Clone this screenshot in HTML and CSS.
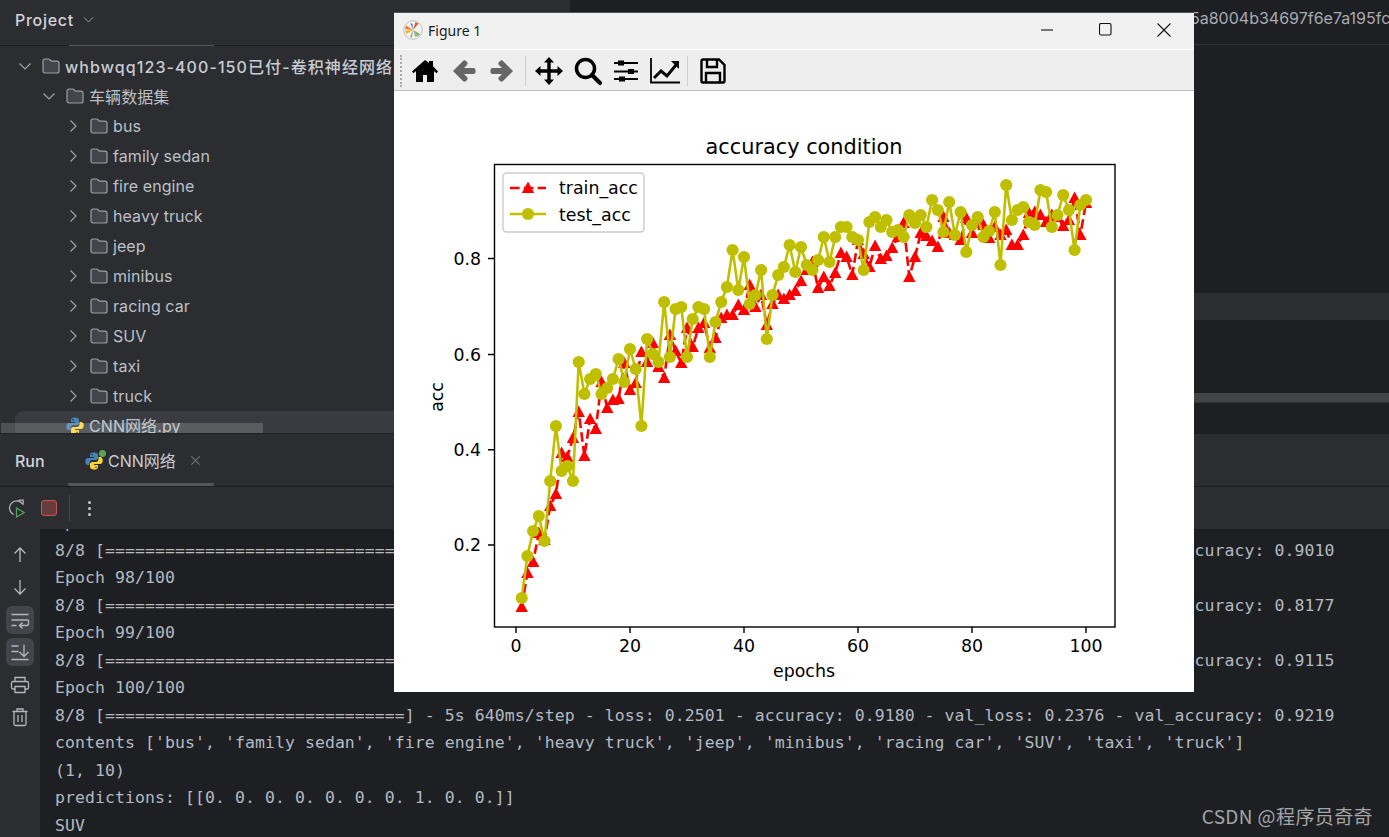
FILE: index.html
```html
<!DOCTYPE html>
<html lang="zh">
<head>
<meta charset="utf-8">
<title>Figure 1</title>
<link rel="stylesheet" href="styles.css">
</head>
<body>
<svg class="defs" width="0" height="0" aria-hidden="true">
  <symbol id="folder" viewBox="0 0 18 16"><path class="folder-path" d="M1 3a2 2 0 0 1 2-2h3.600a1.500 1.500 0 0 1 1.100.500L9.400 3.200H15a2 2 0 0 1 2 2V13a2 2 0 0 1-2 2H3a2 2 0 0 1-2-2z"/></symbol>
  <symbol id="chev-r" viewBox="0 0 16 16"><path class="chev" d="M5.500 2.500 11 8l-5.500 5.500"/></symbol>
  <symbol id="chev-d" viewBox="0 0 16 16"><path class="chev" d="M2.500 5.500 8 11l5.500-5.500"/></symbol>
  <symbol id="python" viewBox="0 0 18 18">
    <path class="py-blue" d="M8.800.5C5.500.5 5 1.800 5 3v2h4v1H3C1.300 6 .3 7.300.3 9.500S1.300 13 3 13h1.500v-2.200c0-1.500 1.200-2.800 2.800-2.800h3.500c1.200 0 2.200-1 2.200-2.200V3c0-1.500-1.500-2.500-4.200-2.500z"/>
    <path class="py-yellow" d="M9.200 17.500c3.300 0 3.800-1.300 3.800-2.500v-2H9v-1h6c1.700 0 2.700-1.300 2.700-3.500S16.700 5 15 5h-1.500v2.200c0 1.500-1.200 2.800-2.800 2.800H7.200C6 10 5 11 5 12.200V15c0 1.500 1.500 2.500 4.200 2.500z"/>
    <circle class="py-eye" cx="7" cy="2.700" r=".8"/><circle class="py-eye" cx="11" cy="15.300" r=".8"/>
  </symbol>
</svg>

<div class="ide">
  <div class="upper">
    <section class="project">
      <header class="project-head">
        <span class="project-title">Project</span>
        <svg class="head-chev"><use href="#chev-d"/></svg>
        <span class="head-underline"></span>
      </header>
      <ul class="tree">
        <li class="row lvl0"><svg class="chv"><use href="#chev-d"/></svg><svg class="fld"><use href="#folder"/></svg><span class="root-name">whbwqq123-400-150已付-卷积神经网络</span></li>
        <li class="row lvl1"><svg class="chv"><use href="#chev-d"/></svg><svg class="fld"><use href="#folder"/></svg><span>车辆数据集</span></li>
        <li class="row lvl2"><svg class="chv"><use href="#chev-r"/></svg><svg class="fld"><use href="#folder"/></svg><span>bus</span></li>
        <li class="row lvl2"><svg class="chv"><use href="#chev-r"/></svg><svg class="fld"><use href="#folder"/></svg><span>family sedan</span></li>
        <li class="row lvl2"><svg class="chv"><use href="#chev-r"/></svg><svg class="fld"><use href="#folder"/></svg><span>fire engine</span></li>
        <li class="row lvl2"><svg class="chv"><use href="#chev-r"/></svg><svg class="fld"><use href="#folder"/></svg><span>heavy truck</span></li>
        <li class="row lvl2"><svg class="chv"><use href="#chev-r"/></svg><svg class="fld"><use href="#folder"/></svg><span>jeep</span></li>
        <li class="row lvl2"><svg class="chv"><use href="#chev-r"/></svg><svg class="fld"><use href="#folder"/></svg><span>minibus</span></li>
        <li class="row lvl2"><svg class="chv"><use href="#chev-r"/></svg><svg class="fld"><use href="#folder"/></svg><span>racing car</span></li>
        <li class="row lvl2"><svg class="chv"><use href="#chev-r"/></svg><svg class="fld"><use href="#folder"/></svg><span>SUV</span></li>
        <li class="row lvl2"><svg class="chv"><use href="#chev-r"/></svg><svg class="fld"><use href="#folder"/></svg><span>taxi</span></li>
        <li class="row lvl2"><svg class="chv"><use href="#chev-r"/></svg><svg class="fld"><use href="#folder"/></svg><span>truck</span></li>
        <li class="row file selected"><svg class="fld"><use href="#python"/></svg><span class="file-name">CNN网络.py</span></li>
      </ul>
      <div class="tree-scroll"></div>
    </section>
    <section class="editor">
      <div class="editor-tabs"><span class="hash">5a8004b34697f6e7a195fc</span></div>
      <div class="editor-space-a"></div>
      <div class="editor-band"></div>
      <div class="editor-space-b"></div>
      <div class="editor-scroll"></div>
    </section>
  </div>

  <section class="run">
    <header class="run-head">
      <span class="run-title">Run</span>
      <div class="run-tab">
        <span class="tab-icon"><svg class="tab-py"><use href="#python"/></svg><i class="tab-dot"></i></span>
        <span class="tab-name">CNN网络</span>
        <svg class="tab-close" viewBox="0 0 12 12"><path d="M1.500 1.500l9 9M10.500 1.500l-9 9"/></svg>
      </div>
    </header>
    <div class="run-tools">
      <svg class="tool-ic" viewBox="0 0 20 20">
        <path class="ic-line" d="M16.500 5.500A7.500 7.500 0 1 0 7 16.300"/><path class="ic-line" d="M12.200 1.200h4.800V6"/>
        <path class="ic-green" d="M10 9.500l8 4.700-8 4.700z"/>
      </svg>
      <span class="stop"></span>
      <span class="tool-sep"></span>
      <span class="kebab"><i></i><i></i><i></i></span>
    </div>
    <div class="run-body">
      <aside class="side-tools">
        <svg class="side-ic" viewBox="0 0 20 20"><path class="ic-line" d="M10 17V3M4.500 8.500 10 3l5.500 5.500"/></svg>
        <svg class="side-ic" viewBox="0 0 20 20"><path class="ic-line" d="M10 3v14M4.500 11.500 10 17l5.500-5.500"/></svg>
        <span class="side-btn"><svg class="side-ic" viewBox="0 0 20 20"><path class="ic-line" d="M1.500 4.500h17M1.500 10h17M1.500 15.500h5M18.500 10v3.500a2 2 0 0 1-2 2H10M12.500 12.500 9.500 15.500l3 3"/></svg></span>
        <span class="side-btn"><svg class="side-ic" viewBox="0 0 20 20"><path class="ic-line" d="M1.500 4h7M1.500 9.500h7M1.500 17.500h17M14 2.500v12M9.500 10l4.500 4.500 4.500-4.500"/></svg></span>
        <svg class="side-ic" viewBox="0 0 20 20"><path class="ic-line" d="M5 6.500V2.500h10v4M5 14H3a1.500 1.500 0 0 1-1.500-1.500V8A1.500 1.500 0 0 1 3 6.500h14A1.500 1.500 0 0 1 18.500 8v4.500A1.500 1.500 0 0 1 17 14h-2M5 11.500h10v6H5z"/></svg>
        <svg class="side-ic" viewBox="0 0 20 20"><path class="ic-line" d="M2.500 4.500h15M7 4.500V2h6v2.500M4 4.500V17a1.500 1.500 0 0 0 1.500 1.500h9A1.500 1.500 0 0 0 16 17V4.500M8 8v7M12 8v7"/></svg>
      </aside>
      <div class="console"><pre class="log">Epoch 97/100
8/8 [==============================] - 5s 652ms/step - loss: 0.2873 - accuracy: 0.9055 - val_loss: 0.2689 - val_accuracy: 0.9010
Epoch 98/100
8/8 [==============================] - 5s 648ms/step - loss: 0.2644 - accuracy: 0.9100 - val_loss: 0.4761 - val_accuracy: 0.8177
Epoch 99/100
8/8 [==============================] - 5s 645ms/step - loss: 0.2712 - accuracy: 0.9080 - val_loss: 0.2655 - val_accuracy: 0.9115
Epoch 100/100
8/8 [==============================] - 5s 640ms/step - loss: 0.2501 - accuracy: 0.9180 - val_loss: 0.2376 - val_accuracy: 0.9219
contents ['bus', 'family sedan', 'fire engine', 'heavy truck', 'jeep', 'minibus', 'racing car', 'SUV', 'taxi', 'truck']
(1, 10)
predictions: [[0. 0. 0. 0. 0. 0. 0. 1. 0. 0.]]
SUV</pre></div>
    </div>
  </section>
</div>

<div class="watermark">CSDN @程序员奇奇</div>

<div class="figure">
  <header class="fig-title">
    <svg class="fig-logo" viewBox="0 0 20 20">
      <circle class="logo-disc" cx="10" cy="10" r="9.300"/>
      <path class="logo-o" d="M10 10 3 5.500 2 9z"/><path class="logo-y" d="M10 10 2 10.500 3.500 14z"/>
      <path class="logo-r" d="M10 10 12.500 2 15.500 3.500z"/><path class="logo-g" d="M10 10 17 14 15 16.500z"/>
      <path class="logo-b" d="M10 10 9.500 4 7.500 3z"/><path class="logo-g" d="M10 10 7 17 9 17.500z"/>
      <path class="logo-s" d="M10 10 12.500 17 14.500 16z"/>
    </svg>
    <span class="fig-name">Figure 1</span>
    <div class="win-ctrls">
      <svg class="win-btn" viewBox="0 0 14 14"><path d="M0 7h12"/></svg>
      <svg class="win-btn" viewBox="0 0 14 14"><rect x=".5" y=".5" width="11.500" height="11.500" rx="1.500"/></svg>
      <svg class="win-btn" viewBox="0 0 14 14"><path d="M.5.500l13 13M13.500.500l-13 13"/></svg>
    </div>
  </header>
  <div class="fig-tools">
    <span class="grip"></span>
    <svg class="t-ic t-home" viewBox="0 0 28 24"><path class="solid" d="M14 1 1 12.500l1.500 1.700L5 12v11h7v-7h4v7h7V12l2.500 2.200 1.500-1.700L22 7.200V2h-4v2z"/></svg>
    <svg class="t-ic t-arrow" viewBox="0 0 24 24"><path class="gray" d="M1 12 11 2q1.500-1.500 3 0l1 1q1.500 1.500 0 3l-3 3h9.500q2 0 2 2v2q0 2-2 2H12l3 3q1.500 1.500 0 3l-1 1q-1.500 1.500-3 0z"/></svg>
    <svg class="t-ic t-arrow" viewBox="0 0 24 24"><path class="gray" d="M23 12 13 2q-1.500-1.500-3 0l-1 1q-1.500 1.500 0 3l3 3H2.500q-2 0-2 2v2q0 2 2 2H12l-3 3q-1.500 1.500 0 3l1 1q1.500 1.500 3 0z"/></svg>
    <span class="t-sep"></span>
    <svg class="t-ic t-move" viewBox="0 0 28 28"><path class="solid" d="M14 0l5 5.500h-3.300v6.800h6.800V9L28 14l-5.500 5v-3.300h-6.800v6.800H19L14 28l-5-5.500h3.300v-6.800H5.500V19L0 14l5.500-5v3.300h6.800V5.500H9z"/></svg>
    <svg class="t-ic t-zoom" viewBox="0 0 28 28"><circle class="hollow" cx="11.500" cy="11.500" r="9"/><path class="heavy" d="M18 18l8 8"/></svg>
    <svg class="t-ic t-sliders" viewBox="0 0 26 26"><path class="thin" d="M1 5h24M1 13.500h24M1 21h24"/><path class="solid" d="M5 2.500h6v5H5zM15 11h6v5h-6zM6 18.500h6v5H6z"/></svg>
    <svg class="t-ic t-chart" viewBox="0 0 30 26"><path class="thin" d="M1 0v24.500h29"/><path class="heavy2" d="M4 20l7-7 6 5 9-11"/><path class="solid" d="M21 3h8v8z"/></svg>
    <span class="t-sep t-sep2"></span>
    <svg class="t-ic t-save" viewBox="0 0 26 26"><path class="save" d="M1.500 3a1.500 1.500 0 0 1 1.500-1.500h16l5.500 5.500v16a1.500 1.500 0 0 1-1.500 1.500H3A1.500 1.500 0 0 1 1.500 23z"/><path class="save" d="M7 2v7h10V2M6 24.500V15h14v9.500"/></svg>
  </div>
  <svg class="plot" viewBox="394 91 800 601" width="800" height="601">
    <defs>
      <marker id="tri" markerUnits="userSpaceOnUse" markerWidth="16" markerHeight="16" refX="8" refY="8" viewBox="0 0 16 16"><path class="tri" d="M8 1.500 14.200 13H1.800z"/></marker>
      <marker id="dot" markerUnits="userSpaceOnUse" markerWidth="14" markerHeight="14" refX="7" refY="7" viewBox="0 0 14 14"><circle class="dot" cx="7" cy="7" r="6.100"/></marker>
    </defs>
    <rect class="axes-bg" x="494" y="164.500" width="621" height="463"/>
    <polyline class="train" points="521.7,607 527.4,573 533.1,562 538.800,533 544.5,540 550.2,506 555.9,494 561.6,453 567.3,457 573,438 578.7,412 584.4,456 590.1,419 595.8,429 601.5,382 607.2,408 612.9,400 618.6,399 624.3,363 630,390 635.7,383 641.4,352 647.1,362 652.8,343 658.5,367 664.2,378 669.9,335 675.6,351 681.3,363 687,328 692.7,347 698.4,328 704.1,323 709.8,348 715.5,338 721.2,318 726.9,315 732.6,315 738.3,305 744,310 749.7,285 755.4,307 761.1,295 766.8,325 772.5,304 778.2,295 783.9,299 789.6,295 795.3,291 801,281 806.7,270 812.4,262 818.1,288 823.8,277 829.5,286 835.2,273 840.9,253 846.6,257 852.3,275 858,240 863.7,254 869.4,267 875.1,246 880.8,259 886.5,256 892.2,248 897.9,237 903.6,223 909.3,277 915,257 920.7,233 926.4,236 932.1,241 937.8,247 943.5,217 949.2,233 954.9,235 960.6,240 966.3,218 972,233 977.7,223 983.4,225 989.1,238 994.8,227 1000.5,235 1006.2,230 1011.9,245 1017.6,245 1023.3,235 1029,213 1034.7,212 1040.4,215 1046.1,222 1051.8,215 1057.5,217 1063.2,226 1068.9,220 1074.6,198 1080.3,235 1086,203"/>
    <polyline class="test" points="521.7,598 527.4,556 533.1,531 538.800,516 544.5,541 550.2,481 555.9,426 561.6,471 567.3,466 573,481 578.7,362 584.4,394 590.1,379 595.8,374 601.5,394 607.2,388 612.9,379 618.6,359 624.3,382 630,349 635.7,369 641.4,426 647.1,339 652.8,354 658.5,362 664.2,302 669.9,357 675.6,309 681.3,307 687,357 692.7,319 698.4,307 704.1,309 709.8,357 715.5,322 721.2,302 726.9,287 732.6,250 738.3,290 744,257 749.7,304 755.4,295 761.1,270 766.8,339 772.5,295 778.2,275 783.9,267 789.6,245 795.3,272 801,247 806.7,265 812.4,270 818.1,260 823.8,237 829.5,262 835.2,237 840.9,227 846.6,227 852.3,237 858,240 863.7,270 869.4,222 875.1,217 880.8,227 886.5,220 892.2,232 897.9,230 903.6,237 909.3,215 915,223 920.7,215 926.4,227 932.1,200 937.8,210 943.5,232 949.2,202 954.9,235 960.6,212 966.3,252 972,225 977.7,217 983.4,237 989.1,231 994.8,212 1000.5,265 1006.2,185 1011.9,220 1017.6,210 1023.3,207 1029,222 1034.7,225 1040.4,190 1046.1,192 1051.8,227 1057.5,215 1063.2,195 1068.9,210 1074.6,250 1080.3,205 1086,200"/>
    <rect class="axes-frame" x="494.500" y="164.500" width="620.500" height="462.500"/>
    <path class="ticks" d="M516 627v6M630 627v6M744 627v6M858 627v6M972 627v6M1086 627v6M494 545h-6M494 449.700h-6M494 354.500h-6M494 258.500h-6"/>
    <g class="tick-x">
      <text x="516" y="652">0</text><text x="630" y="652">20</text><text x="744" y="652">40</text><text x="858" y="652">60</text><text x="972" y="652">80</text><text x="1086" y="652">100</text>
    </g>
    <g class="tick-y">
      <text x="481" y="551">0.2</text><text x="481" y="456">0.4</text><text x="481" y="361">0.6</text><text x="481" y="265">0.8</text>
    </g>
    <text class="ax-label" x="804" y="677">epochs</text>
    <text class="ax-label" transform="translate(443 397) rotate(-90)">acc</text>
    <text class="ax-title" x="804" y="154">accuracy condition</text>
    <rect class="legend" x="503" y="173" width="141" height="59" rx="3.500"/>
    <polyline class="train leg-line" points="510,188 528,188 546,188"/>
    <polyline class="test leg-line" points="510,214 528,214 546,214"/>
    <text class="leg-text" x="559" y="194">train_acc</text>
    <text class="leg-text" x="559" y="221">test_acc</text>
  </svg>
</div>
</body>
</html>
```
FILE: styles.css
```css
* { box-sizing: border-box; }
html, body { margin: 0; padding: 0; }
body {
  width: 1389px;
  height: 837px;
  overflow: hidden;
  position: relative;
  background: #1e1f22;
  color: #bcbec4;
  font-family: Inter, "Noto Sans CJK SC", sans-serif;
}
.defs { position: absolute; }

.ide { display: flex; flex-direction: column; height: 837px; }
.upper { display: flex; height: 434px; border-bottom: 1px solid #1e1f22; }

/* project tool window */
.project { width: 570px; background: #2b2d30; position: relative; overflow: hidden; }
.project-head {
  height: 46px;
  display: flex;
  align-items: center;
  padding: 0 0 6px 15px;
  border-bottom: 1px solid #1e1f22;
  position: relative;
}
.project-title { font-size: 16px; font-weight: 500; letter-spacing: .7px; color: #d2d4da; }
.head-chev { width: 13px; height: 13px; margin-left: 8px; }
.head-underline { position: absolute; left: 69px; bottom: -1px; width: 145px; height: 1px; background: #55575c; }
.tree { list-style: none; margin: 0; padding: 5px 0 0; }
.row {
  height: 30px;
  display: flex;
  align-items: center;
  font-size: 16px;
  letter-spacing: .08px;
  color: #bcc0c8;
  white-space: nowrap;
}
.chv { width: 16px; height: 16px; flex: none; margin-right: 9px; }
.fld { width: 18px; height: 16px; flex: none; margin-right: 5px; }
.lvl0 { padding-left: 17px; }
.lvl1 { padding-left: 41px; }
.lvl2 { padding-left: 65px; }
.root-name { font-weight: 500; letter-spacing: 1.080px; color: #c8ccd4; }
.selected { margin-left: 15px; padding-left: 51px; background: #393b40; border-radius: 8px 0 0 8px; }
.selected .fld { height: 18px; margin-right: 5px; }
.file-name { position: relative; top: -1px; }
.tree-scroll { position: absolute; left: 1px; top: 423px; width: 262px; height: 10px; background: rgba(255, 255, 255, .17); }
.chev { fill: none; stroke: #9da0a8; stroke-width: 1.200; }
.folder-path { fill: #43454a; stroke: #9da0a8; stroke-width: 1.200; }
.py-blue { fill: #4584b6; }
.py-yellow { fill: #ffd43b; }
.py-eye { fill: #2b2d30; }

/* editor */
.editor { flex: 1; display: flex; flex-direction: column; min-width: 0; }
.editor-tabs {
  height: 45px;
  border-bottom: 1px solid #2f3136;
  padding: 8px 0 0 620px;
  overflow: hidden;
  white-space: nowrap;
}
.hash { font-size: 16px; color: #a8abb3; }
.editor-space-a { height: 248px; }
.editor-band { height: 27px; background: #2b2d30; }
.editor-space-b { height: 73px; }
.editor-scroll { height: 10px; background: #434445; border-bottom: 1px solid #2f3033; }

/* run tool window */
.run { flex: 1; display: flex; flex-direction: column; min-height: 0; }
.run-head {
  height: 53px;
  background: #2b2d30;
  display: flex;
  align-items: center;
  padding-left: 15px;
  border-bottom: 1px solid #1e1f22;
}
.run-title { font-size: 16px; font-weight: 500; color: #d2d4da; width: 53px; flex: none; position: relative; top: 1px; }
.run-tab {
  width: 146px;
  height: 52px;
  display: flex;
  align-items: center;
  padding: 3px 0 0 16px;
  border-bottom: 3px solid #55575c;
  border-radius: 0 0 2px 2px;
}
.tab-icon { position: relative; width: 20px; height: 20px; flex: none; margin-right: 4px; }
.tab-py { width: 18px; height: 18px; position: absolute; left: 1px; top: 2px; }
.tab-dot { position: absolute; right: -2px; top: 0; width: 7px; height: 7px; border-radius: 50%; background: #57a65c; }
.tab-name { font-size: 16px; color: #c8ccd4; white-space: nowrap; }
.tab-close { width: 11px; height: 11px; margin-left: 14px; flex: none; }
.tab-close path { fill: none; stroke: #6f7178; stroke-width: 1.300; }
.run-tools {
  height: 42px;
  background: #2b2d30;
  display: flex;
  align-items: center;
  padding-left: 7px;
}
.tool-ic { width: 19px; height: 19px; flex: none; }
.ic-line { fill: none; stroke: #b4b8bf; stroke-width: 1.300; }
.ic-green { fill: #2b2d30; stroke: #57a65c; stroke-width: 1.300; }
.stop { width: 16px; height: 16px; margin-left: 15px; border: 1.500px solid #c75450; border-radius: 3px; background: #663c3c; flex: none; }
.tool-sep { width: 1px; height: 26px; background: #43454a; margin-left: 12px; flex: none; }
.kebab { display: flex; flex-direction: column; gap: 3px; margin-left: 18px; }
.kebab i { width: 3px; height: 3px; border-radius: 50%; background: #c5c8ce; }
.run-body { flex: 1; display: flex; min-height: 0; overflow: hidden; }
.side-tools {
  width: 40px;
  flex: none;
  background: #2b2d30;
  display: flex;
  flex-direction: column;
  align-items: center;
  padding-top: 16px;
  gap: 12.400px;
}
.side-ic { width: 20px; height: 20px; display: block; flex: none; }
.side-btn {
  width: 28px;
  height: 28px;
  margin: -4px 0;
  border-radius: 6px;
  background: #43454a;
  display: flex;
  align-items: center;
  justify-content: center;
  flex: none;
}
.console { flex: 1; padding-left: 15px; overflow: hidden; background: #1e1f22; }
.log {
  margin: -20px 0 0;
  font-family: "DejaVu Sans Mono", monospace;
  font-size: 16.470px;
  letter-spacing: .09px;
  line-height: 27.500px;
  color: #b3bac2;
}

.watermark {
  position: absolute;
  right: 16px;
  bottom: 8px;
  font-family: "Noto Sans CJK SC", "Noto Sans", sans-serif;
  font-size: 19px;
  letter-spacing: .4px;
  color: #a3a5a8;
}

/* matplotlib window */
.figure {
  position: absolute;
  left: 394px;
  top: 12px;
  width: 800px;
  height: 680px;
  background: #fff;
  border-top: 1px solid #55575c;
  color: #111;
  display: flex;
  flex-direction: column;
}
.fig-title {
  height: 37px;
  background: #f1f1f1;
  border-bottom: 1px solid #fff;
  display: flex;
  align-items: center;
  padding: 0 0 2px 9px;
  flex: none;
}
.fig-logo { width: 20px; height: 20px; flex: none; }
.logo-disc { fill: #f4f2ee; stroke: #b5b5b5; stroke-width: .800; }
.logo-o { fill: #e8792b; }
.logo-y { fill: #f0b52a; }
.logo-r { fill: #e2572c; }
.logo-g { fill: #7cb45a; }
.logo-b { fill: #3a7ca8; }
.logo-s { fill: #8fa7b3; }
.fig-name { font-family: "Noto Sans", sans-serif; font-size: 14px; margin-left: 5px; color: #1a1a1a; }
.win-ctrls { margin-left: auto; display: flex; gap: 44px; padding-right: 23px; }
.win-btn { width: 14px; height: 14px; fill: none; stroke: #111; stroke-width: 1.100; }
.fig-tools {
  height: 41px;
  flex: none;
  background: #eeeeee;
  border-bottom: 1px solid #c0c0c0;
  display: flex;
  align-items: center;
  padding: 1px 0 0 6px;
}
.grip { width: 2px; height: 32px; border-left: 2px dotted #a8a8a8; flex: none; margin-right: 9px; }
.t-ic { flex: none; display: block; }
.t-home { width: 28px; height: 24px; }
.t-arrow { width: 24px; height: 24px; margin-left: 12.500px; }
.t-arrow + .t-arrow { margin-left: 14px; }
.t-sep { width: 1px; height: 30px; background: #d0d0d0; margin: 0 9px 0 11px; flex: none; }
.t-move { width: 28px; height: 28px; }
.t-zoom { width: 28px; height: 28px; margin-left: 11px; }
.t-sliders { width: 26px; height: 26px; margin-left: 11px; }
.t-chart { width: 30px; height: 26px; margin-left: 11px; }
.t-sep2 { margin: 0 12px 0 7px; }
.t-save { width: 26px; height: 26px; }
.solid { fill: #000; }
.gray { fill: #666; }
.hollow { fill: none; stroke: #000; stroke-width: 3.500; }
.heavy { fill: none; stroke: #000; stroke-width: 4; stroke-linecap: round; }
.heavy2 { fill: none; stroke: #000; stroke-width: 3; }
.thin { fill: none; stroke: #000; stroke-width: 1.800; }
.save { fill: none; stroke: #000; stroke-width: 2.400; }

/* chart */
.plot { display: block; flex: none; }
.axes-bg { fill: #fff; }
.axes-frame { fill: none; stroke: #000; stroke-width: 1.400; }
.ticks { fill: none; stroke: #000; stroke-width: 1.400; }
.train {
  fill: none;
  stroke: #f00;
  stroke-width: 2.600;
  stroke-dasharray: 9.600 4.200;
  marker: url(#tri);
}
.test { fill: none; stroke: #bfbf00; stroke-width: 2.600; marker: url(#dot); }
.leg-line { marker-start: none; marker-end: none; }
.tri { fill: #f00; }
.dot { fill: #bfbf00; }
.plot text { font-family: "DejaVu Sans", sans-serif; font-size: 17.360px; fill: #000; }
.tick-x text, .ax-label, .ax-title { text-anchor: middle; }
.tick-y text { text-anchor: end; }
.plot .ax-title { font-size: 20.830px; }
.legend { fill: #fff; fill-opacity: .8; stroke: #ccc; stroke-width: 1.400; }
```
